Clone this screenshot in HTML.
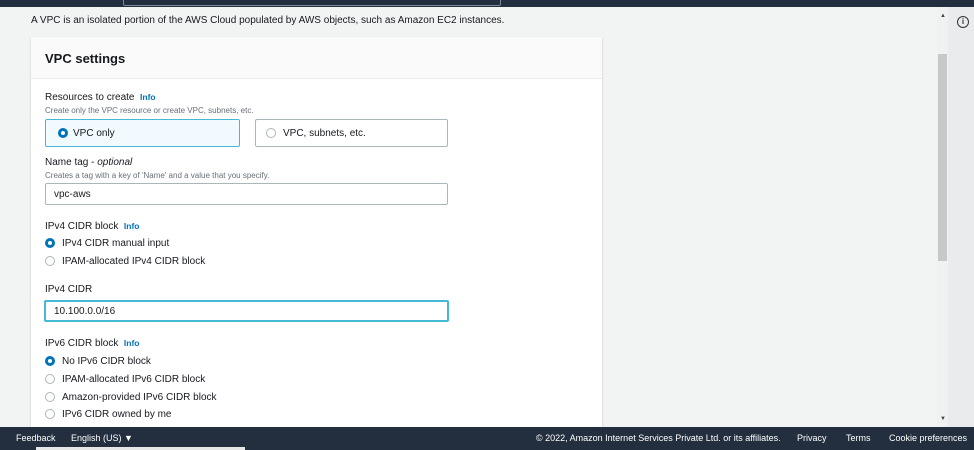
<!DOCTYPE html>
<html><head><meta charset="utf-8"><style>
*{margin:0;padding:0;box-sizing:border-box}
body{width:974px;height:450px;overflow:hidden;background:#f2f3f3;font-family:"Liberation Sans",sans-serif;color:#16191f;position:relative}
.a{position:absolute;white-space:nowrap}
.top{left:0;top:0;width:974px;height:7px;background:#232f3e}
.sb{left:123px;top:-3px;width:378px;height:9px;border:1px solid #7d8998;border-radius:2px}
.card{left:31px;top:37px;width:571px;height:400px;background:#fff;box-shadow:0 1px 2px rgba(0,0,0,.2)}
.hdr{left:31px;top:37px;width:571px;height:42px;background:#fafafa;border-bottom:1px solid #eaeded}
.lbl{font-size:10px;color:#16191f}
.help{font-size:8px;color:#687078}
.info{font-size:8.5px;color:#0073bb;font-weight:bold}
.tile{height:28px;border:1px solid #aab7b8;border-radius:2px;background:#fff;font-size:10px;padding-left:27px;line-height:28px}
.tile.sel{border-color:#44b9d6;background:#f1faff}
.rd{width:10px;height:10px;border-radius:50%;border:1px solid #aab7b8;background:#fff}
.rd.on{border:3px solid #0073bb}
.inp{height:22px;border:1px solid #aab7b8;border-radius:2px;font-size:10px;padding-left:8px;line-height:22px;background:#fff}
.foot{left:0;top:427px;width:974px;height:23px;background:#232f3e;color:#fff;font-size:9px}
</style></head><body>
<div class="a top"></div><div class="a sb"></div>
<div class="a" style="left:948px;top:7px;width:26px;height:420px;background:#e9ebed"></div>
<div class="a" style="left:957px;top:16px;width:12px;height:12px;border:1.5px solid #333;border-radius:50%;font-size:8px;line-height:9px;text-align:center;font-weight:bold;color:#333">i</div>
<div class="a" style="left:937px;top:7px;width:11px;height:420px;background:#f1f1f1"></div>
<div class="a" style="left:938px;top:54px;width:9px;height:207px;background:#c8c8c8"></div>
<div class="a" style="left:940px;top:13px;font-size:6px;color:#444">▲</div>
<div class="a" style="left:940px;top:416px;font-size:6px;color:#444">▼</div>
<div class="a" style="left:31px;top:15px;font-size:10px">A VPC is an isolated portion of the AWS Cloud populated by AWS objects, such as Amazon EC2 instances.</div>
<div class="a card"></div><div class="a hdr"></div>
<div class="a" style="left:45px;top:51px;font-size:13px;font-weight:bold">VPC settings</div>
<div class="a lbl" style="left:45px;top:92px">Resources to create &nbsp;<span class="info">Info</span></div>
<div class="a help" style="left:45px;top:106px">Create only the VPC resource or create VPC, subnets, etc.</div>
<div class="a tile sel" style="left:45px;top:119px;width:195px">VPC only</div>
<div class="a rd on" style="left:58px;top:128px"></div>
<div class="a tile" style="left:255px;top:119px;width:193px">VPC, subnets, etc.</div>
<div class="a rd" style="left:266px;top:128px"></div>
<div class="a lbl" style="left:45px;top:157px">Name tag - <i>optional</i></div>
<div class="a help" style="left:45px;top:171px">Creates a tag with a key of 'Name' and a value that you specify.</div>
<div class="a inp" style="left:45px;top:183px;width:403px">vpc-aws</div>
<div class="a lbl" style="left:45px;top:221px">IPv4 CIDR block &nbsp;<span class="info">Info</span></div>
<div class="a rd on" style="left:45px;top:238px"></div><div class="a lbl" style="left:62px;top:238px">IPv4 CIDR manual input</div>
<div class="a rd" style="left:45px;top:256px"></div><div class="a lbl" style="left:62px;top:256px">IPAM-allocated IPv4 CIDR block</div>
<div class="a lbl" style="left:45px;top:284px">IPv4 CIDR</div>
<div class="a inp" style="left:44px;top:300px;width:405px;border:2px solid #44b9d6;line-height:20px">10.100.0.0/16</div>
<div class="a lbl" style="left:45px;top:338px">IPv6 CIDR block &nbsp;<span class="info">Info</span></div>
<div class="a rd on" style="left:45px;top:356px"></div><div class="a lbl" style="left:62px;top:356px">No IPv6 CIDR block</div>
<div class="a rd" style="left:45px;top:374px"></div><div class="a lbl" style="left:62px;top:374px">IPAM-allocated IPv6 CIDR block</div>
<div class="a rd" style="left:45px;top:392px"></div><div class="a lbl" style="left:62px;top:392px">Amazon-provided IPv6 CIDR block</div>
<div class="a rd" style="left:45px;top:409px"></div><div class="a lbl" style="left:62px;top:409px">IPv6 CIDR owned by me</div>
<div class="a foot">
<div class="a" style="left:16px;top:6px">Feedback</div>
<div class="a" style="left:71px;top:6px">English (US) ▼</div>
<div class="a" style="left:536px;top:6px">© 2022, Amazon Internet Services Private Ltd. or its affiliates.</div>
<div class="a" style="left:797px;top:6px">Privacy</div>
<div class="a" style="left:846px;top:6px">Terms</div>
<div class="a" style="left:889px;top:6px">Cookie preferences</div>
<div class="a" style="left:36px;top:20px;width:209px;height:3px;background:#e6e6e6"></div>
</div>
</body></html>
